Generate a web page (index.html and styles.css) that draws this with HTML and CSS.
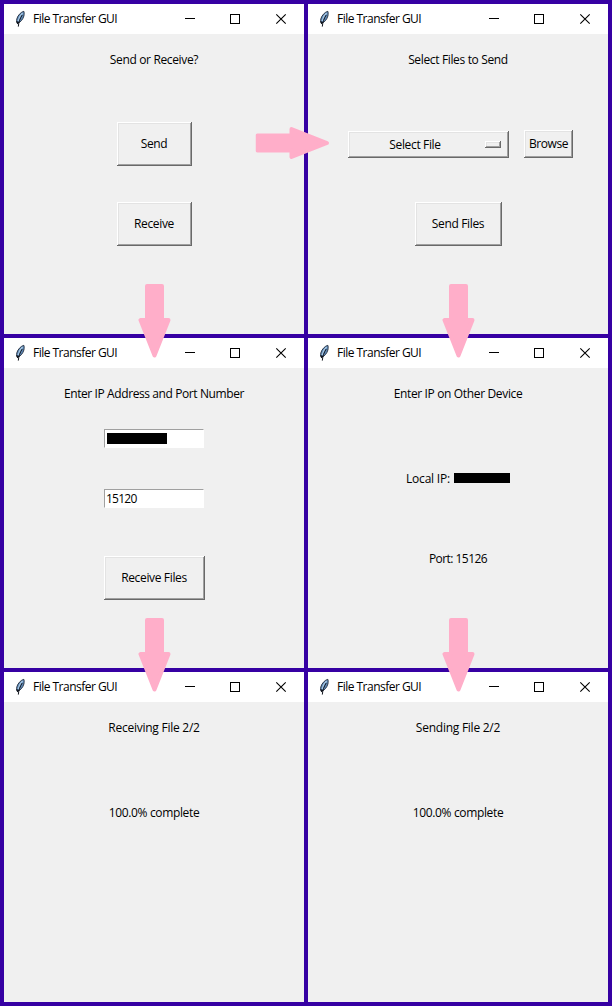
FILE: index.html
```html
<!DOCTYPE html>
<html lang="en">
<head>
<meta charset="utf-8">
<title>File Transfer GUI</title>
<link rel="stylesheet" href="styles.css">
</head>
<body>
<svg class="defs" width="0" height="0">
  <defs>
    <symbol id="feather" viewBox="0 0 12 18">
      <path d="M9.8 1.3 C7 2 3.6 5.500 2.800 9 C2.400 11 2.600 12.300 3.400 13.400 C6.200 12.500 9 9.500 9.900 6 C10.300 4 10.300 2.300 9.800 1.300 Z" fill="#5f8ab8" stroke="#222b3a" stroke-width="0.9"/>
      <path d="M8.600 3 C6.400 5 4.700 8 4.200 11" fill="none" stroke="#a9c9e4" stroke-width="1.300"/>
      <path d="M8.200 5 C6 8.500 4.700 12 4.300 16.600" fill="none" stroke="#10141c" stroke-width="1"/>
      <path d="M2.100 10.800 L3.200 14.200 L5.600 12.600" fill="#10141c"/>
    </symbol>
    <symbol id="controls" viewBox="0 0 104 12">
      <path d="M0 5.500 H10" fill="none" stroke="#000"/>
      <rect x="45.500" y="1.500" width="9" height="9" fill="none" stroke="#000"/>
      <path d="M91.300 1.300 L100.700 10.700 M100.700 1.300 L91.300 10.700" fill="none" stroke="#000" stroke-width="1.1"/>
    </symbol>
    <symbol id="arrow" viewBox="0 0 33 74">
      <path d="M9 2 H24 V36 H30.500 L16.500 71.500 L2.500 36 H9 Z" fill="#ffaec9" stroke="#ffaec9" stroke-width="4" stroke-linejoin="round"/>
    </symbol>
  </defs>
</svg>
<main class="board">
  <section class="window">
    <header class="titlebar"><svg class="feather"><use href="#feather"/></svg><span class="title">File Transfer GUI</span><svg class="controls"><use href="#controls"/></svg></header>
    <div class="content">
      <div class="heading"><span>Send or Receive?</span></div>
      <button class="button send">Send</button>
      <button class="button receive">Receive</button>
    </div>
  </section>
  <section class="window">
    <header class="titlebar"><svg class="feather"><use href="#feather"/></svg><span class="title">File Transfer GUI</span><svg class="controls"><use href="#controls"/></svg></header>
    <div class="content">
      <div class="heading"><span>Select Files to Send</span></div>
      <div class="picker">
        <button class="button option"><span class="option-label">Select File</span><i class="indicator"></i></button>
        <button class="button browse">Browse</button>
      </div>
      <button class="button send-files">Send Files</button>
    </div>
  </section>
  <section class="window">
    <header class="titlebar"><svg class="feather"><use href="#feather"/></svg><span class="title">File Transfer GUI</span><svg class="controls"><use href="#controls"/></svg></header>
    <div class="content">
      <div class="heading prompt"><span>Enter IP Address and Port Number</span></div>
      <div class="entry address"><i class="redacted address-value"></i></div>
      <div class="entry port">15120</div>
      <button class="button receive-files">Receive Files</button>
    </div>
  </section>
  <section class="window">
    <header class="titlebar"><svg class="feather"><use href="#feather"/></svg><span class="title">File Transfer GUI</span><svg class="controls"><use href="#controls"/></svg></header>
    <div class="content">
      <div class="heading"><span>Enter IP on Other Device</span></div>
      <div class="label local-ip"><span>Local IP:</span><i class="redacted ip-value"></i></div>
      <div class="label port-label"><span>Port: 15126</span></div>
    </div>
  </section>
  <section class="window">
    <header class="titlebar"><svg class="feather"><use href="#feather"/></svg><span class="title">File Transfer GUI</span><svg class="controls"><use href="#controls"/></svg></header>
    <div class="content">
      <div class="heading progress"><span>Receiving File 2/2</span></div>
      <div class="label status"><span>100.0% complete</span></div>
    </div>
  </section>
  <section class="window">
    <header class="titlebar"><svg class="feather"><use href="#feather"/></svg><span class="title">File Transfer GUI</span><svg class="controls"><use href="#controls"/></svg></header>
    <div class="content">
      <div class="heading progress"><span>Sending File 2/2</span></div>
      <div class="label status"><span>100.0% complete</span></div>
    </div>
  </section>
  <svg class="arrow to-select"><use href="#arrow"/></svg>
  <svg class="arrow to-address"><use href="#arrow"/></svg>
  <svg class="arrow to-device"><use href="#arrow"/></svg>
  <svg class="arrow to-receiving"><use href="#arrow"/></svg>
  <svg class="arrow to-sending"><use href="#arrow"/></svg>
</main>
</body>
</html>
```

FILE: styles.css
```css
* { box-sizing: border-box; }
body {
  margin: 0;
  font: 12px/20px "Open Sans", "Noto Sans", sans-serif;
  letter-spacing: -0.35px;
  color: #000;
}
.defs { position: absolute; }
.board {
  position: relative;
  display: grid;
  grid-template-columns: 300px 300px;
  grid-template-rows: repeat(3, 330px);
  gap: 4px;
  width: 612px;
  height: 1006px;
  padding: 4px;
  background: #3600a3;
}
.window { display: flex; flex-direction: column; background: #f0f0f0; }
.titlebar {
  display: flex;
  align-items: center;
  height: 30px;
  padding-left: 10px;
  background: #fff;
}
.feather { width: 12px; height: 18px; }
.title { width: 152px; padding-left: 7px; letter-spacing: -0.52px; white-space: nowrap; }
.controls { width: 104px; height: 12px; margin: -1px 0 0 7px; }
.content {
  display: flex;
  flex: 1;
  flex-direction: column;
  align-items: center;
  padding-top: 16px;
}
.heading, .label { height: 20px; white-space: nowrap; }
.prompt { letter-spacing: -0.4px; }
.progress { letter-spacing: -0.25px; }
.button {
  height: 44px;
  padding: 0;
  border: 0;
  background: #f0f0f0;
  box-shadow: inset -1px -1px #696969, inset 1px 1px #fff, inset -2px -2px #a0a0a0, inset 2px 2px #e3e3e3;
  font: inherit;
  letter-spacing: inherit;
  color: inherit;
  white-space: nowrap;
}
.send { width: 75px; margin-top: 52px; }
.receive { width: 75px; margin-top: 36px; }
.picker {
  display: flex;
  align-items: flex-end;
  align-self: flex-start;
  gap: 15px;
  margin: 60px 0 0 40px;
}
.option {
  display: flex;
  align-items: center;
  width: 161px;
  height: 27px;
  padding-left: 2px;
}
.option-label { width: 130px; text-align: center; }
.indicator {
  width: 16px;
  height: 7px;
  margin: -1px 0 0 5px;
  box-shadow: inset -1px -1px #696969, inset 1px 1px #fff, inset -2px -2px #a0a0a0, inset 2px 2px #e3e3e3;
}
.browse { width: 49px; height: 28px; letter-spacing: -0.45px; }
.send-files { width: 87px; margin-top: 44px; }
.entry {
  width: 100px;
  height: 19px;
  padding-left: 1px;
  border: 1px solid #fff;
  border-top-color: #a0a0a0;
  border-left-color: #a0a0a0;
  background: #fff;
  line-height: 17px;
}
.redacted { display: block; background: #000; }
.address { margin-top: 25px; padding: 3px 2px; }
.address-value { width: 60px; height: 11px; }
.port { margin-top: 41px; letter-spacing: -0.75px; }
.receive-files { width: 101px; margin-top: 48px; }
.local-ip { display: flex; align-items: center; gap: 4px; margin-top: 65px; letter-spacing: -0.2px; }
.ip-value { width: 56px; height: 10px; margin-top: -2px; }
.port-label { margin-top: 60px; letter-spacing: -0.55px; }
.status { margin-top: 65px; }
.arrow { position: absolute; width: 33px; height: 74px; }
.to-select { left: 276px; top: 106px; transform: rotate(-90deg); }
.to-address { left: 138px; top: 284px; }
.to-device { left: 442px; top: 284px; }
.to-receiving { left: 138px; top: 618px; }
.to-sending { left: 442px; top: 618px; }
```
